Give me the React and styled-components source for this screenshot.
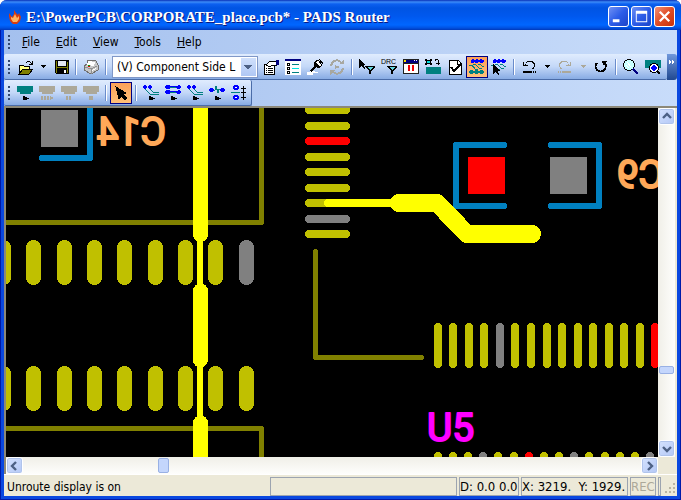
import styled, { createGlobalStyle } from "styled-components";

const menus = ["File", "Edit", "View", "Tools", "Help"];

// x positions of the long vertical pads
const widePads = [-4, 26, 57, 87, 117, 148, 178, 208, 239];
const finePads = [434, 449, 465, 480, 496, 511, 527, 543, 558, 574, 589, 605, 620, 636, 651];
const lowerPads = [434, 449, 464, 479, 494, 510, 525, 540, 555, 570, 585, 601, 616, 631, 646];
const sidePads = [106, 122, 137, 153, 168, 184, 199, 215, 230];

const PAD = "#c0c000";
const GRAY = "#808080";
const OLIVE = "#808000";
const TRACE = "#ffff00";
const BLUE = "#0080c0";

export default function App() {
  return (
    <>
      <GlobalStyle />
      <Window>
        <TitleBar>
          <Flame />
          <Title>E:\PowerPCB\CORPORATE_place.pcb* - PADS Router</Title>
          <CaptionButton type="button" aria-label="Minimize">
            <CaptionGlyph>
              <path d="M4 13h7v3H4z" fill="#fff" />
            </CaptionGlyph>
          </CaptionButton>
          <CaptionButton type="button" aria-label="Maximize">
            <CaptionGlyph>
              <path d="M4 4h12v12H4zM5 7v8h10V7z" fill="#fff" fillRule="evenodd" />
            </CaptionGlyph>
          </CaptionButton>
          <CaptionButton type="button" aria-label="Close" $close>
            <CaptionGlyph>
              <path d="M5 5l10 10M15 5L5 15" stroke="#fff" strokeWidth="2.4" />
            </CaptionGlyph>
          </CaptionButton>
        </TitleBar>
        <Body>
          <MenuBar>
            <Grip />
            {menus.map((m) => (
              <MenuItem type="button" key={m}>
                <u>{m[0]}</u>
                {m.slice(1)}
              </MenuItem>
            ))}
          </MenuBar>
          <MainRow>
            <MainTools>
              <Grip />
              <Tool label="Open">
                <path d="M2 15V6h4l1 1h5v3" fill="#ffff80" stroke="#000" />
                <path d="M2 15l4-5h10l-4 5z" fill="#808000" stroke="#000" />
                <path d="M9 3h1V2h3v1h1v1h1V2h1v4h-4V5h2V4h-1V3h-3v1H9z" />
              </Tool>
              <Caret />
              <Tool label="Save">
                <path d="M2 1h14v14H3l-1-1z" />
                <path d="M3 2h1v12H3zM14 3h1v11h-1zM4 8h10v1H4z" fill="#808000" />
                <path d="M5 2h8v5H5z" fill="#e4e8f0" />
                <path d="M11 11h2v3h-2z" fill="#fff" />
              </Tool>
              <Separator />
              <Tool label="Print">
                <path d="M5 1l8 1 2 4v5l-7 4-7-4V7l3-2z" fill="#c8c8c8" stroke="#707070" />
                <path d="M5 2l7 1-1 4-7-1z" fill="#fff" />
                <path d="M2 8l6 2 6-3M8 10v5" fill="none" stroke="#909090" />
                <path d="M5 6h2v1H5z" fill="#00a000" />
                <path d="M5 7h2v1H5z" fill="#e00000" />
                <path d="M9 11l4-2v1l-4 2z" fill="#fff" />
              </Tool>
              <Separator />
              <LayerSelect aria-label="Layer" defaultValue="v">
                <option value="v">(V) Component Side L</option>
              </LayerSelect>
              <Tool label="Properties">
                <path d="M1 5h10v10H1z" fill="#fff" stroke="#000" />
                <path d="M3 9h1v1H3zM5 9h5v1H5zM3 11h1v1H3zM5 11h5v1H5zM3 13h1v1H3zM5 13h5v1H5z" />
                <path d="M3 6l4-4h6v4H9L7 8z" fill="#fff" stroke="#000" />
                <path d="M13 1h3v5h-3z" fill="#000080" />
              </Tool>
              <Tool label="Project list">
                <path d="M0 0h16v16H0z" fill="#fff" />
                <path d="M0 0h16v2H0z" fill="#000080" />
                <path d="M2 4h3v3H2zM2 8h3v3H2zM2 12h3v3H2z" />
                <path d="M3 5h1v1H3zM3 9h1v1H3zM3 13h1v1H3z" fill="#fff" />
                <path d="M7 5h7v1H7zM7 13h7v1H7z" fill="#008080" />
                <path d="M7 9h7v1H7z" fill="#00e0e0" />
              </Tool>
              <Tool label="Spotlight">
                <path d="M0 13h3v-1h5v1h3v1H6v2H0z" fill="#fff" />
                <path d="M8 3l3-2 4 5-2 2z" fill="#fff" stroke="#000" />
                <path d="M7 3h2l4 5v1h-2L9 8l-4 5H4l-1-1v-1l4-4z" />
                <path d="M9 3l4 4 1-1-3-4z" fill="#fff" />
                <path d="M12 0h1l3 4v1h-1z" />
              </Tool>
              <Tool label="Redraw">
                <path d="M2 7a6 6 0 0 1 10-4M14 9a6 6 0 0 1-10 4" fill="none" stroke="#a8a8a0" strokeWidth="2" />
                <path d="M10 5h5V0zM6 11H1v5zM6 6l1 1h2l1-1v4l-1-1H7l-1 1z" fill="#a8a8a0" />
              </Tool>
              <Separator />
              <Tool label="Selection filter">
                <path d="M0 0l7 6H5l1 4-2-1-1-2-3 2z" />
                <Funnel />
              </Tool>
              <Tool label="DRC filter">
                <DrcText x="0" y="5">DRC</DrcText>
                <Funnel />
              </Tool>
              <Tool label="Halt">
                <path d="M0 0h16v15H0z" fill="#202020" />
                <path d="M1 1h14v3H1z" fill="#000080" />
                <path d="M11 1h1v1h-1zM13 1h1v1h-1z" fill="#fff" />
                <path d="M1 1h2v2H1z" fill="#ffe000" />
                <path d="M1 5h14v9H1z" fill="#fff" />
                <path d="M5 6h2v6H5zM9 6h2v6H9z" fill="#f00000" />
              </Tool>
              <Tool label="Place component">
                <path d="M1 8h15v7H1z" fill="#008080" />
                <path d="M0 0h2v1h3V0h2v2H6v2h1v2H5V5H2v1H0V4h1V2H0z" />
                <path d="M2 2h3v2H2z" fill="#00e0e0" />
                <path d="M10 0h3v1h1v3h1v1h-1v1h-1V5h-2V4h2V1h-2v1h-1z" />
              </Tool>
              <Tool label="Verify">
                <path d="M2 1h9l3 3v11H2z" fill="#fff" stroke="#000" />
                <path d="M10 1v4h4" fill="none" stroke="#000" />
                <path d="M4 8l3 4 7-7" fill="none" stroke="#000" strokeWidth="2" />
              </Tool>
              <Tool label="Show unroutes" $active>
                <Unroutes />
                <path d="M0 12h1v-1h3v1h2v-1h3v1h2v-1h3v1h1v2h-1v1h-3v-1H9v1H6v-1H4v1H1v-1H0z" fill="#008080" />
              </Tool>
              <Tool label="Select unroutes">
                <Unroutes />
                <path d="M2 5l7 7H7l1 4-2-1-1-2-3 2z" />
              </Tool>
              <Separator />
              <Tool label="Undo">
                <path d="M5 3h1V2h6v1h1v1h1v4h-1v2h-2V9h1V8h1V5h-1V4h-1V3H6v1H5zM2 3h1v3h1V5h1v1h2v1H2zM2 12h9v2H2zM12 12h1v2h-1zM14 12h1v2h-1z" />
              </Tool>
              <Caret />
              <Tool label="Redo">
                <path d="M11 3h-1V2H4v1H3v1H2v4h1v2h2V9H4V8H3V5h1V4h1V3h5v1h1zM14 3h-1v3h-1V5h-1v1H9v1h5zM5 12h9v2H5zM3 12h1v2H3zM1 12h1v2H1z" fill="#aca899" />
              </Tool>
              <Caret $off />
              <Tool label="Reload">
                <path d="M4 4a5 5 0 1 0 8 1" fill="none" stroke="#000" strokeWidth="2" />
                <path d="M9 2h5v1h-1v2h1v2h-2V5h-1v1h-1V4H9z" />
              </Tool>
              <Separator />
              <Tool label="Zoom">
                <circle cx="6" cy="6" r="5.5" fill="#c8ffff" stroke="#000" />
                <path d="M4 3l4 5M3 6l3 3" stroke="#fff" />
                <path d="M10 10l5 5" stroke="#000080" strokeWidth="2.6" />
              </Tool>
              <Tool label="Board view">
                <path d="M0 1h16v8H0z" fill="#008080" />
                <circle cx="9" cy="9" r="4.5" fill="#fff" stroke="#000" />
                <circle cx="9" cy="9" r="2.6" fill="#0000ff" />
                <path d="M12 12l3 3" stroke="#000" strokeWidth="1.6" />
              </Tool>
            </MainTools>
            <Overflow type="button" aria-label="More buttons">
              <svg width="6" height="4" shapeRendering="crispEdges">
                <path d="M0 0l2 2-2 2zM3 0l2 2-2 2z" fill="#fff" />
              </svg>
            </Overflow>
          </MainRow>
          <RouteTools>
            <Grip />
            <Tool label="Start">
              <Board fill="#008080" />
              <Play />
            </Tool>
            <Tool label="Step">
              <Board fill="#aca899" />
              <path d="M2 11h2v4H2zM5 11h2v4H5zM8 11h2v4H8zM11 11l4 2-4 2z" fill="#aca899" />
            </Tool>
            <Tool label="Pause">
              <Board fill="#aca899" />
              <path d="M5 11h2v4H5zM8 11h2v4H8z" fill="#aca899" />
            </Tool>
            <Tool label="Stop">
              <Board fill="#aca899" />
              <path d="M6 11h4v4H6z" fill="#aca899" />
            </Tool>
            <Separator />
            <Tool label="Select" $active>
              <path d="M3 2l10 6-3 1 4 4-2 2-4-4-2 3z" stroke="#000" />
            </Tool>
            <Separator />
            <Tool label="Fanout">
              <FanOut />
              <Play />
            </Tool>
            <Tool label="Route">
              <path d="M1 0h3l1 1h7l1-1h2l1 2-1 2h-3l-1-1H5L4 4H1L0 2zM1 5h3l1 1h7l1-1h2l1 2-1 2h-3l-1-1H5L4 9H1L0 7z" fill="#0000ff" />
              <path d="M5 2h6v1H5zM5 7h6v1H5z" fill="#008080" />
              <Play />
            </Tool>
            <Tool label="Optimize">
              <FanOut />
              <Play />
            </Tool>
            <Tool label="Tune">
              <path d="M0 4h1V3h3v1h1v2H4v1H1V6H0zM11 4h1V3h3v1h1v2h-1v1h-3V6h-1z" fill="#0000ff" />
              <path d="M5 5h1l1-4 2 7 1-4 1 1" fill="none" stroke="#008080" />
              <Play />
            </Tool>
            <Tool label="Center">
              <circle cx="5" cy="2.5" r="2" fill="#fff" stroke="#0000ff" strokeWidth="2" />
              <circle cx="5" cy="12.5" r="2" fill="#fff" stroke="#0000ff" strokeWidth="2" />
              <path d="M0 7h9v1H0z" fill="#008080" />
              <path d="M12 1h1v14h-1zM10 3h5v1h-5zM10 7h5v1h-5zM10 12h5v1h-5z" />
            </Tool>
          </RouteTools>
          <Workspace>
            <Viewport>
              <BoardDrawing />
            </Viewport>
            <VTrack>
              <ScrollButton type="button" aria-label="Scroll up">
                <Chevron d="M4 9l4-4 4 4" />
              </ScrollButton>
              <Gap $grow={241} />
              <VThumb />
              <Gap $grow={66} />
              <ScrollButton type="button" aria-label="Scroll down">
                <Chevron d="M4 6l4 4 4-4" />
              </ScrollButton>
            </VTrack>
            <HTrack>
              <ScrollButton type="button" aria-label="Scroll left">
                <Chevron d="M9 4L5 8l4 4" />
              </ScrollButton>
              <Gap $grow={135} />
              <HThumb />
              <Gap $grow={473} />
              <ScrollButton type="button" aria-label="Scroll right">
                <Chevron d="M6 4l4 4-4 4" />
              </ScrollButton>
            </HTrack>
          </Workspace>
          <StatusBar>
            <Message>Unroute display is on</Message>
            <Pane $width={187} />
            <Pane $width={60}>D: 0.0 0.0</Pane>
            <Pane $width={107}>{"X: 3219.  Y: 1929."}</Pane>
            <Pane $width={26} $off>REC</Pane>
            <Pane $width={3} />
            <SizeGrip>
              <path d="M9 1h2v2H9zM5 5h2v2H5zM9 5h2v2H9zM1 9h2v2H1zM5 9h2v2H5zM9 9h2v2H9z" fill="#b8b4a3" />
            </SizeGrip>
          </StatusBar>
        </Body>
      </Window>
    </>
  );
}

function Tool({ label, $active, children }) {
  return (
    <ToolButton type="button" aria-label={label} $active={$active}>
      <svg width="16" height="16" viewBox="0 0 16 16" shapeRendering="crispEdges">
        {children}
      </svg>
    </ToolButton>
  );
}

function Caret({ $off }) {
  return (
    <CaretButton type="button" aria-label="More">
      <svg width="5" height="3" shapeRendering="crispEdges">
        <path d="M0 0h5v1H4v1H3v1H2V2H1V1H0z" fill={$off ? "#aca899" : "#000"} />
      </svg>
    </CaretButton>
  );
}

function Board({ fill }) {
  return <path d="M0 1h16v6h-2v2H3V7H0z" fill={fill} />;
}

function Play() {
  return <path d="M6 11h2v1h2v1h2v1h-2v1H6z" />;
}

function Funnel() {
  return (
    <>
      <path d="M6 7h10v1l-4 4v3h-2v-3L6 8z" />
      <path d="M8 8h6l-3 3z" fill="#60d8e0" />
    </>
  );
}

function Unroutes() {
  return (
    <>
      <path d="M2 1h1V0h2v1h2V0h2v1h2V0h2v1h2v2h-1v1h-3V3H9v1H6V3H5v1H2z" fill="#0000ff" />
      <path d="M0 6h3l3 4h3M4 5h2l4 4h3M9 5h2l2 2h2" fill="none" stroke="#008080" />
    </>
  );
}

function FanOut() {
  return (
    <>
      <path d="M0 1h1V0h2v1h1v2H3v1H1V3H0zM5 1h1V0h2v1h1v2H8v1H6V3H5z" fill="#0000ff" />
      <path d="M2 4l5 5h9M7 4l3 3h6" fill="none" stroke="#008080" />
    </>
  );
}

function Chevron({ d }) {
  return (
    <svg width="15" height="15" viewBox="0 0 15 15">
      <path d={d} fill="none" stroke="#4d6185" strokeWidth="2.4" />
    </svg>
  );
}

function Flame() {
  return (
    <FlameSvg viewBox="0 0 12 14">
      <path d="M5 0l2 3 2 2 1-2 2 4-1 4-3 3H4L1 11 0 6V3l2 3 1 1 2-3z" fill="#d83c10" />
      <path d="M6 4l2 4 2-2v3l-2 3H4L2 9V7l2 1z" fill="#ffb060" />
    </FlameSvg>
  );
}

function CaptionGlyph({ children }) {
  return (
    <svg width="19" height="19" viewBox="0 0 20 20">
      {children}
    </svg>
  );
}

function BoardDrawing() {
  return (
    <Drawing viewBox="6 108 652 349" shapeRendering="crispEdges">
      <g fill="none" stroke={OLIVE} strokeWidth="5" strokeLinecap="round" strokeLinejoin="round">
        <path d="M0 222.500H261.500V100" />
        <path d="M0 428.500H261.500V470" />
        <path d="M315.500 251.500V357.500H421.500" />
      </g>
      {widePads.map((x) => (
        <rect key={x} x={x} y="240" width="15" height="45" rx="8" fill={x === 239 ? GRAY : PAD} />
      ))}
      {widePads.map((x) => (
        <rect key={x} x={x} y="366" width="15" height="45" rx="8" fill={PAD} />
      ))}
      {sidePads.map((y) => (
        <rect
          key={y}
          x="305"
          y={y}
          width="45"
          height="8"
          rx="4"
          fill={y === 137 ? "#ff0000" : y === 215 ? GRAY : PAD}
        />
      ))}
      {finePads.map((x) => (
        <rect
          key={x}
          x={x}
          y="323"
          width="8"
          height="45"
          rx="4"
          fill={x === 496 ? GRAY : x === 651 ? "#ff0000" : PAD}
        />
      ))}
      {lowerPads.map((x) => (
        <rect
          key={x}
          x={x}
          y="452"
          width="8"
          height="45"
          rx="4"
          fill={x === 525 ? "#ff0000" : [479, 570, 646].includes(x) ? GRAY : PAD}
        />
      ))}
      <rect x="41" y="110" width="37" height="37" fill={GRAY} />
      <rect x="468" y="157" width="37" height="37" fill="#ff0000" />
      <rect x="550" y="157" width="37" height="37" fill={GRAY} />
      <g fill="none" stroke={BLUE} strokeWidth="6" strokeLinecap="round" strokeLinejoin="round">
        <path d="M42 158H90V100" />
        <path d="M504 145H456V206H504" />
        <path d="M551 145H599V206H551" />
      </g>
      <g fill="none" stroke={TRACE} strokeLinecap="round" strokeLinejoin="round">
        <path d="M200.500 100V234.500M200.500 291V360M200.500 423V470" strokeWidth="15" />
        <path d="M200 230V430" strokeWidth="6" />
        <path d="M328 203H400" strokeWidth="8" />
        <path d="M399 203H437L467 234H532" strokeWidth="18" />
      </g>
      <Designator transform="translate(166 145) scale(-1 1)" $color="#ffa858">C14</Designator>
      <Designator transform="translate(664 188) scale(-1 1)" $color="#ffa858">C9</Designator>
      <Designator x="427" y="441" $color="#ff00ff">U5</Designator>
    </Drawing>
  );
}

const GlobalStyle = createGlobalStyle`
  * {
    box-sizing: border-box;
  }

  body {
    margin: 0;
    background: #fff;
    font-family: "DejaVu Sans Condensed", "DejaVu Sans", sans-serif;
    font-size: 12px;
    color: #000;
  }

  button {
    padding: 0;
    border: 0;
    background: none;
    font: inherit;
    color: inherit;
  }

  svg {
    display: block;
  }
`;

const Window = styled.div`
  height: 100vh;

  display: flex;
  flex-direction: column;

  padding: 0 4px 4px;
  border-radius: 7px 7px 0 0;
  background: #0a48e0;
  box-shadow: inset 1px -1px 0 #0019a8, inset -1px 0 0 #0019a8;
  overflow: hidden;
`;

const TitleBar = styled.header`
  height: 30px;
  flex: none;

  display: flex;
  align-items: center;
  gap: 2px;

  margin: 0 -4px;
  padding: 3px 6px 0 9px;
  background: linear-gradient(
    #0831b8 0,
    #3c8cf8 2px,
    #0c60f0 4px,
    #0054e3 8px,
    #0058ee 16px,
    #0066ff 25px,
    #0050e0 28px,
    #0038b8 30px
  );
`;

const Title = styled.h1`
  flex: 1;
  min-width: 0;

  margin: 0 0 0 3px;

  font-family: "Liberation Serif", serif;
  font-size: 15px;
  font-weight: 700;
  line-height: 20px;
  color: #fff;
  text-shadow: 1px 1px 0 #0a1883;
  white-space: nowrap;
`;

const FlameSvg = styled.svg`
  width: 12px;
  height: 14px;
  flex: none;
`;

const CaptionButton = styled.button`
  width: 21px;
  height: 21px;
  flex: none;

  display: grid;
  place-items: center;

  border: 1px solid #fff;
  border-radius: 3px;
  background: ${({ $close }) =>
    $close
      ? "linear-gradient(135deg, #f09078, #e04c24 50%, #c83008)"
      : "linear-gradient(135deg, #7090f4, #2c5ce8 50%, #1c44c8)"};
`;

const Body = styled.div`
  flex: 1;
  min-height: 0;

  display: flex;
  flex-direction: column;

  background: linear-gradient(90deg, #a4c0ee, #c8dcfa);
`;

const MenuBar = styled.nav`
  height: 24px;
  flex: none;

  display: flex;
  align-items: center;

  padding-left: 4px;
`;

const MenuItem = styled.button`
  height: 20px;

  padding: 0 8px;
`;

const Grip = styled.span`
  width: 2px;
  height: 14px;
  flex: none;

  margin-right: 4px;
  background: repeating-linear-gradient(#31466e 0 2px, transparent 2px 4px);
`;

const MainRow = styled.div`
  height: 26px;
  flex: none;

  display: flex;
`;

const MainTools = styled.div`
  flex: 1;
  min-width: 0;

  display: flex;
  align-items: center;

  padding-left: 4px;
  border-bottom: 1px solid #4a6ca8;
  border-radius: 2px;
  background: linear-gradient(#e0ecfe, #c4d8f8 50%, #88ace4);
`;

const RouteTools = styled(MainTools)`
  height: 26px;
  flex: none;
  align-self: flex-start;

  padding-right: 1px;
  border-right: 1px solid #4a6ca8;
`;

const Overflow = styled.button`
  width: 10px;
  flex: none;

  display: flex;
  justify-content: center;

  padding-top: 6px;
  border-radius: 0 3px 3px 0;
  background: linear-gradient(#7098dc, #204890);
`;

const ToolButton = styled.button`
  width: 22px;
  height: 22px;
  flex: none;

  display: grid;
  place-items: center;

  border: 1px solid ${({ $active }) => ($active ? "#000080" : "transparent")};
  background: ${({ $active }) =>
    $active ? "linear-gradient(#fca058, #ffc078)" : "none"};
`;

const CaretButton = styled.button`
  width: 14px;
  height: 22px;
  flex: none;

  display: grid;
  place-items: center;
`;

const Separator = styled.span`
  width: 2px;
  height: 16px;
  flex: none;

  margin: 0 3px;
  border-left: 1px solid #6a8ccb;
  border-right: 1px solid #fff;
`;

const LayerSelect = styled.select`
  width: 146px;
  height: 22px;
  flex: none;

  margin: 0 2px;
  padding: 0 18px 0 4px;
  border: 1px solid #8098c8;
  border-radius: 0;
  appearance: none;

  font: inherit;
  color: #000;

  background:
    linear-gradient(45deg, transparent 50%, #4d6185 50%) 131px 8px / 4px 4px no-repeat,
    linear-gradient(-45deg, transparent 50%, #4d6185 50%) 135px 8px / 4px 4px no-repeat,
    linear-gradient(#d0e0fc, #b0c8f4) 128px 1px / 15px 18px no-repeat,
    #fff;
`;

const DrcText = styled.text`
  font-family: "Liberation Sans", sans-serif;
  font-size: 7px;
`;

const Workspace = styled.div`
  flex: 1;
  min-height: 0;

  display: grid;
  grid-template-columns: 1fr 17px;
  grid-template-rows: 1fr 17px;

  padding-right: 2px;
  border-top: 2px solid #8c8878;
  border-left: 2px solid #8c8878;
  background: #ece9d8;
`;

const Viewport = styled.main`
  min-width: 0;
  min-height: 0;

  background: #000;
  overflow: hidden;
`;

const Drawing = styled.svg`
  width: 652px;
  height: 349px;
`;

const Designator = styled.text`
  font-family: Roboto, sans-serif;
  font-size: 39px;
  fill: ${({ $color }) => $color};
  stroke: ${({ $color }) => $color};
  stroke-width: 2px;
  stroke-linejoin: round;
`;

const VTrack = styled.div`
  display: flex;
  flex-direction: column;
  align-items: center;

  background: linear-gradient(90deg, #f0efe8, #fefefc);
`;

const HTrack = styled.div`
  display: flex;
  align-items: center;

  background: linear-gradient(#f0efe8, #fefefc);
`;

const Gap = styled.span`
  flex: ${({ $grow }) => $grow} 1 0;
`;

const ScrollButton = styled.button`
  width: 17px;
  height: 17px;
  flex: none;

  display: grid;
  place-items: center;

  border: 1px solid #fff;
  border-radius: 3px;
  background: linear-gradient(135deg, #d4e2fe, #b4c8f6);
  box-shadow: inset 0 0 0 1px #b0c4ec;
`;

const VThumb = styled.span`
  width: 15px;
  height: 8px;
  flex: none;

  border: 1px solid #98b0e4;
  border-radius: 2px;
  background: #c4d6fc;
`;

const HThumb = styled(VThumb)`
  width: 11px;
  height: 15px;
`;

const StatusBar = styled.footer`
  height: 22px;
  flex: none;

  display: flex;
  align-items: center;
  gap: 2px;

  padding: 2px 1px 0 3px;
  border-top: 1px solid #fff;
  background: #ece9d8;
`;

const Message = styled.span`
  flex: 1;
  min-width: 0;

  line-height: 18px;
  white-space: nowrap;
`;

const Pane = styled.span`
  width: ${({ $width }) => $width}px;
  height: 19px;
  flex: none;

  border: 1px solid #9ca4b0;

  font-size: 13px;
  line-height: 18px;
  color: ${({ $off }) => ($off ? "#aca899" : "#000")};
  white-space: pre;
  overflow: hidden;
`;

const SizeGrip = styled.svg`
  width: 12px;
  height: 12px;
  flex: none;

  align-self: flex-end;
  margin: 0 0 2px 1px;
`;
